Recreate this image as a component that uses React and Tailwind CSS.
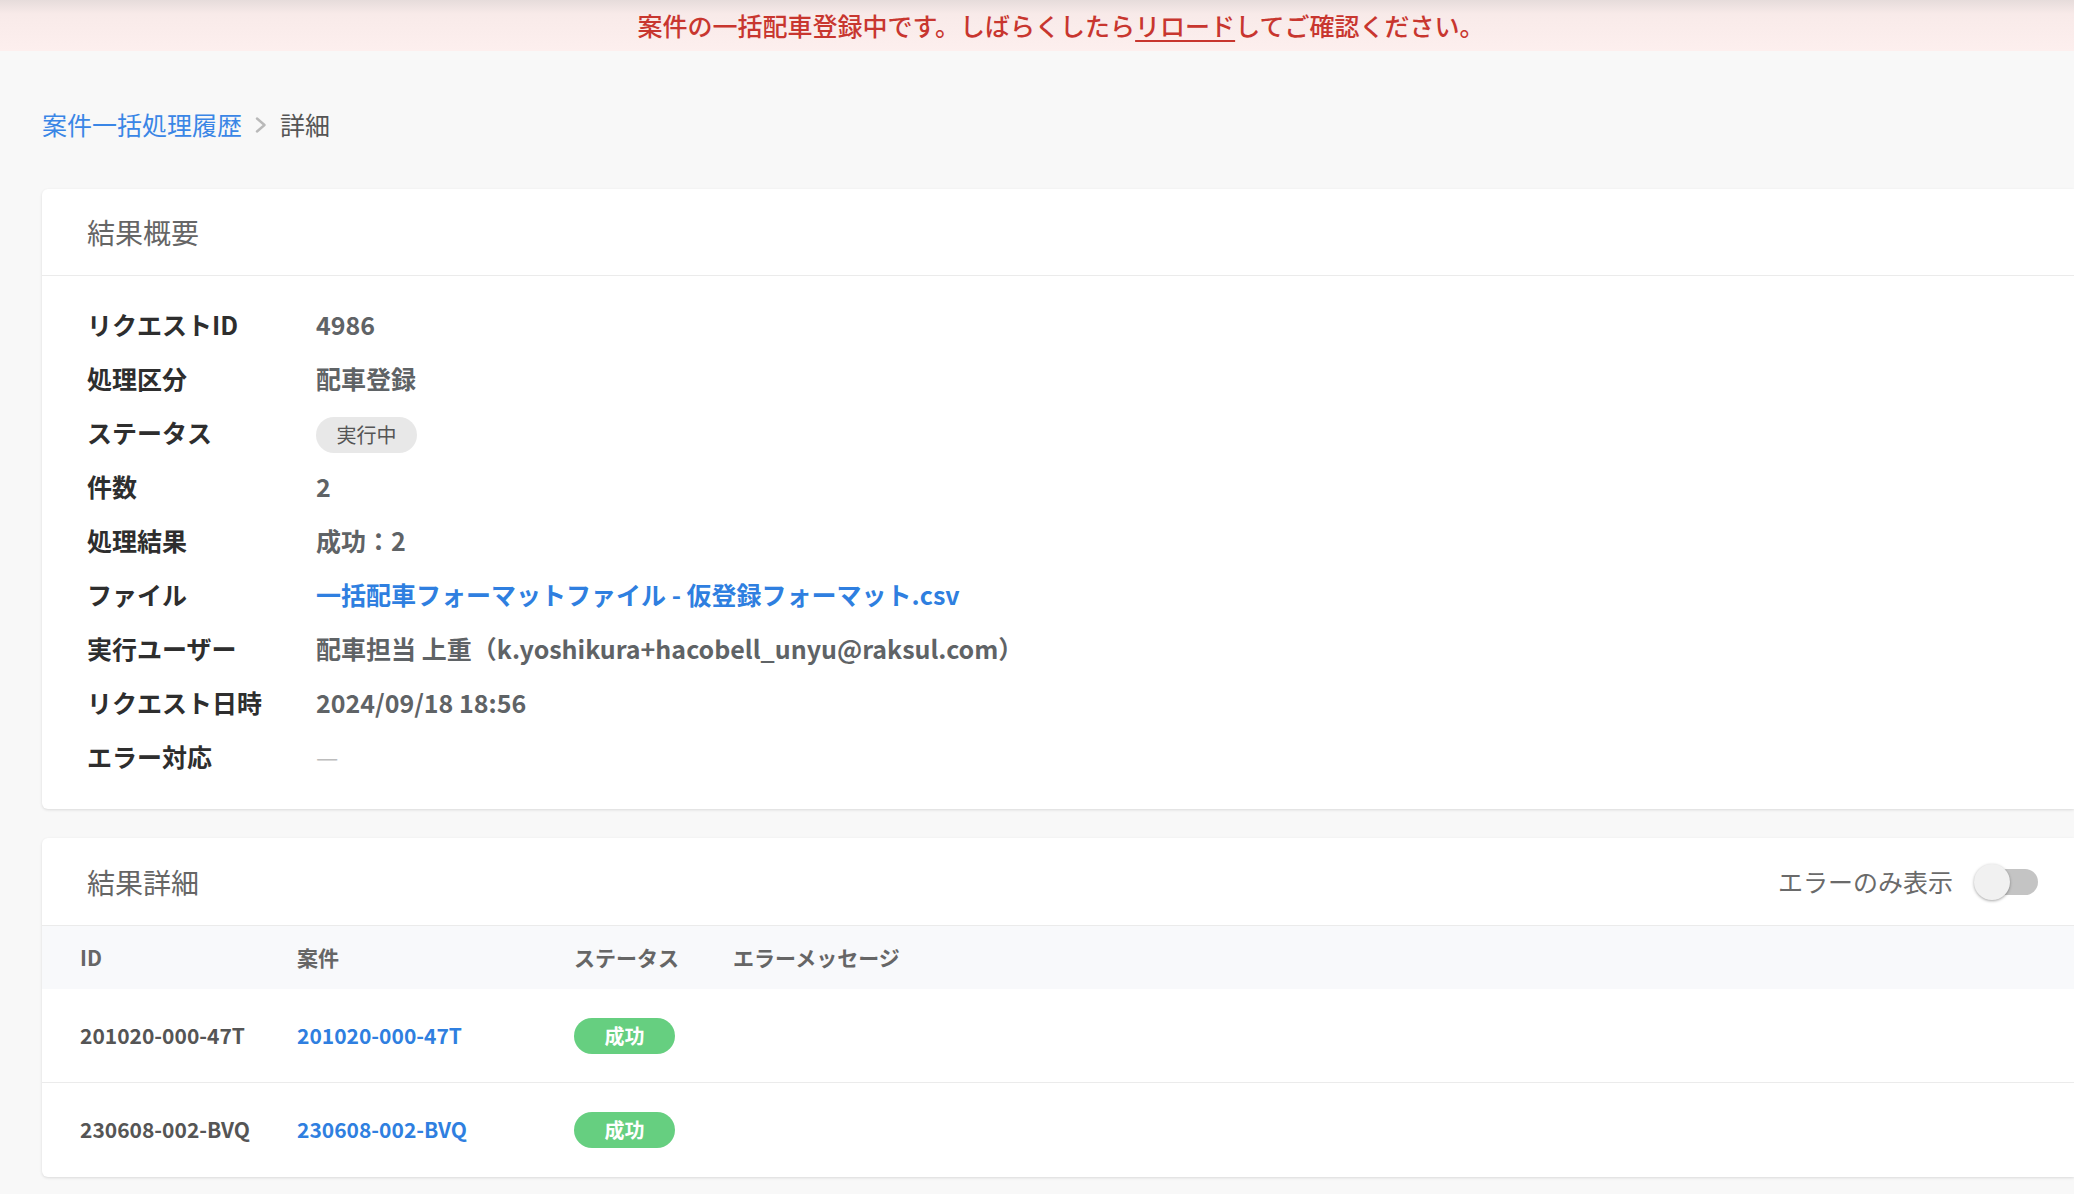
import React, { useState } from 'react';

const font = { fontFamily: '"Noto Sans CJK JP", "Noto Sans", sans-serif' };

const summaryRows = [
  { label: 'リクエストID', value: '4986' },
  { label: '処理区分', value: '配車登録' },
  { label: 'ステータス', value: 'status' },
  { label: '件数', value: '2' },
  { label: '処理結果', value: '成功：2' },
  { label: 'ファイル', value: 'file' },
  { label: '実行ユーザー', value: '配車担当 上重（k.yoshikura+hacobell_unyu@raksul.com）' },
  { label: 'リクエスト日時', value: '2024/09/18 18:56' },
  { label: 'エラー対応', value: 'dash' }
];

const detailRows = [
  { id: '201020-000-47T', order: '201020-000-47T', status: '成功' },
  { id: '230608-002-BVQ', order: '230608-002-BVQ', status: '成功' }
];

const SummaryValue = ({ value }) => {
  if (value === 'status') {
    return (
      <span className="inline-flex h-[36px] w-[101px] items-center justify-center rounded-full bg-[#e8e8e8] text-[20px] text-[#555]">
        実行中
      </span>
    );
  }
  if (value === 'file') {
    return (
      <a href="#" className="font-semibold text-[#2f7fe0]">
        一括配車フォーマットファイル - 仮登録フォーマット.csv
      </a>
    );
  }
  if (value === 'dash') {
    return <span className="text-[#bdbdbd]">—</span>;
  }
  return <span className="font-semibold text-[#5f6366]">{value}</span>;
};

const App = () => {
  const [errorsOnly, setErrorsOnly] = useState(false);

  return (
    <div className="min-h-screen bg-[#f8f8f8] pb-[20px]" style={font}>
      {/* Banner */}
      <div className="flex h-[51px] items-center justify-center bg-[linear-gradient(to_bottom,#e6dcdb_0px,#f8eae9_14px,#fdefee_100%)] pl-[48px] text-[25px] font-medium text-[#c8362f]">
        案件の一括配車登録中です。しばらくしたら<span className="underline underline-offset-4">リロード</span>してご確認ください。
      </div>

      <div className="pl-[42px]">
        {/* Breadcrumb */}
        <div className="mt-[57px] flex h-[34px] items-center text-[25px]">
          <a href="#" className="text-[#3a86e6]">案件一括処理履歴</a>
          <svg className="mx-[13px] h-[16px] w-[12px]" viewBox="0 0 12 16" fill="none">
            <polyline points="2,1.5 9.5,8 2,14.5" stroke="#b9b9b9" strokeWidth="2.4" strokeLinecap="round" strokeLinejoin="round" />
          </svg>
          <span className="text-[#555]">詳細</span>
        </div>

        {/* Summary card */}
        <div className="mt-[47px] rounded-l-[6px] bg-white shadow-[0_1px_3px_rgba(0,0,0,0.12)]">
          <div className="flex h-[87px] items-center border-b border-[#ebebeb] px-[45px] text-[28px] text-[#666]">
            結果概要
          </div>
          <div className="px-[45px] pb-[25px] pt-[22px] text-[25px]">
            {summaryRows.map(row => (
              <div key={row.label} className="grid h-[54px] grid-cols-[229px_1fr] items-center">
                <span className="font-bold text-[#2e2e2e]">{row.label}</span>
                <div>
                  <SummaryValue value={row.value} />
                </div>
              </div>
            ))}
          </div>
        </div>

        {/* Detail card */}
        <div className="mt-[29px] rounded-l-[6px] bg-white shadow-[0_1px_3px_rgba(0,0,0,0.12)]">
          <div className="flex h-[88px] items-center justify-between border-b border-[#ebebeb] pl-[45px] pr-[36px]">
            <span className="text-[28px] text-[#666]">結果詳細</span>
            <div className="flex items-center">
              <span className="mr-[24px] text-[25px] text-[#6a6a6a]">エラーのみ表示</span>
              <button
                type="button"
                onClick={() => setErrorsOnly(!errorsOnly)}
                className="relative h-[26px] w-[61px] rounded-full bg-[#c4c4c4]"
              >
                <span className="absolute left-[-3px] top-[-5px] h-[36px] w-[36px] rounded-full bg-[#f1f1f1] shadow-[0_1px_3px_rgba(0,0,0,0.35)]" />
              </button>
            </div>
          </div>

          <div className="grid h-[63px] grid-cols-[217px_277px_159px_1fr] items-center bg-[#f8f9fb] pl-[38px] text-[21px] font-semibold text-[#666]">
            <span>ID</span>
            <span>案件</span>
            <span>ステータス</span>
            <span>エラーメッセージ</span>
          </div>

          {detailRows.map((row, i) => (
            <div
              key={row.id}
              className={`grid h-[94px] grid-cols-[217px_277px_159px_1fr] items-center pl-[38px] text-[21px] font-semibold ${i === 0 ? 'border-b border-[#ebebeb]' : ''}`}
            >
              <span className="text-[#555]">{row.id}</span>
              <a href="#" className="text-[#2f7fe0]">{row.order}</a>
              <span className="inline-flex h-[36px] w-[101px] items-center justify-center rounded-full bg-[#66cf80] text-[20px] text-white">
                {row.status}
              </span>
              <span />
            </div>
          ))}
        </div>
      </div>
    </div>
  );
};

export default App;
